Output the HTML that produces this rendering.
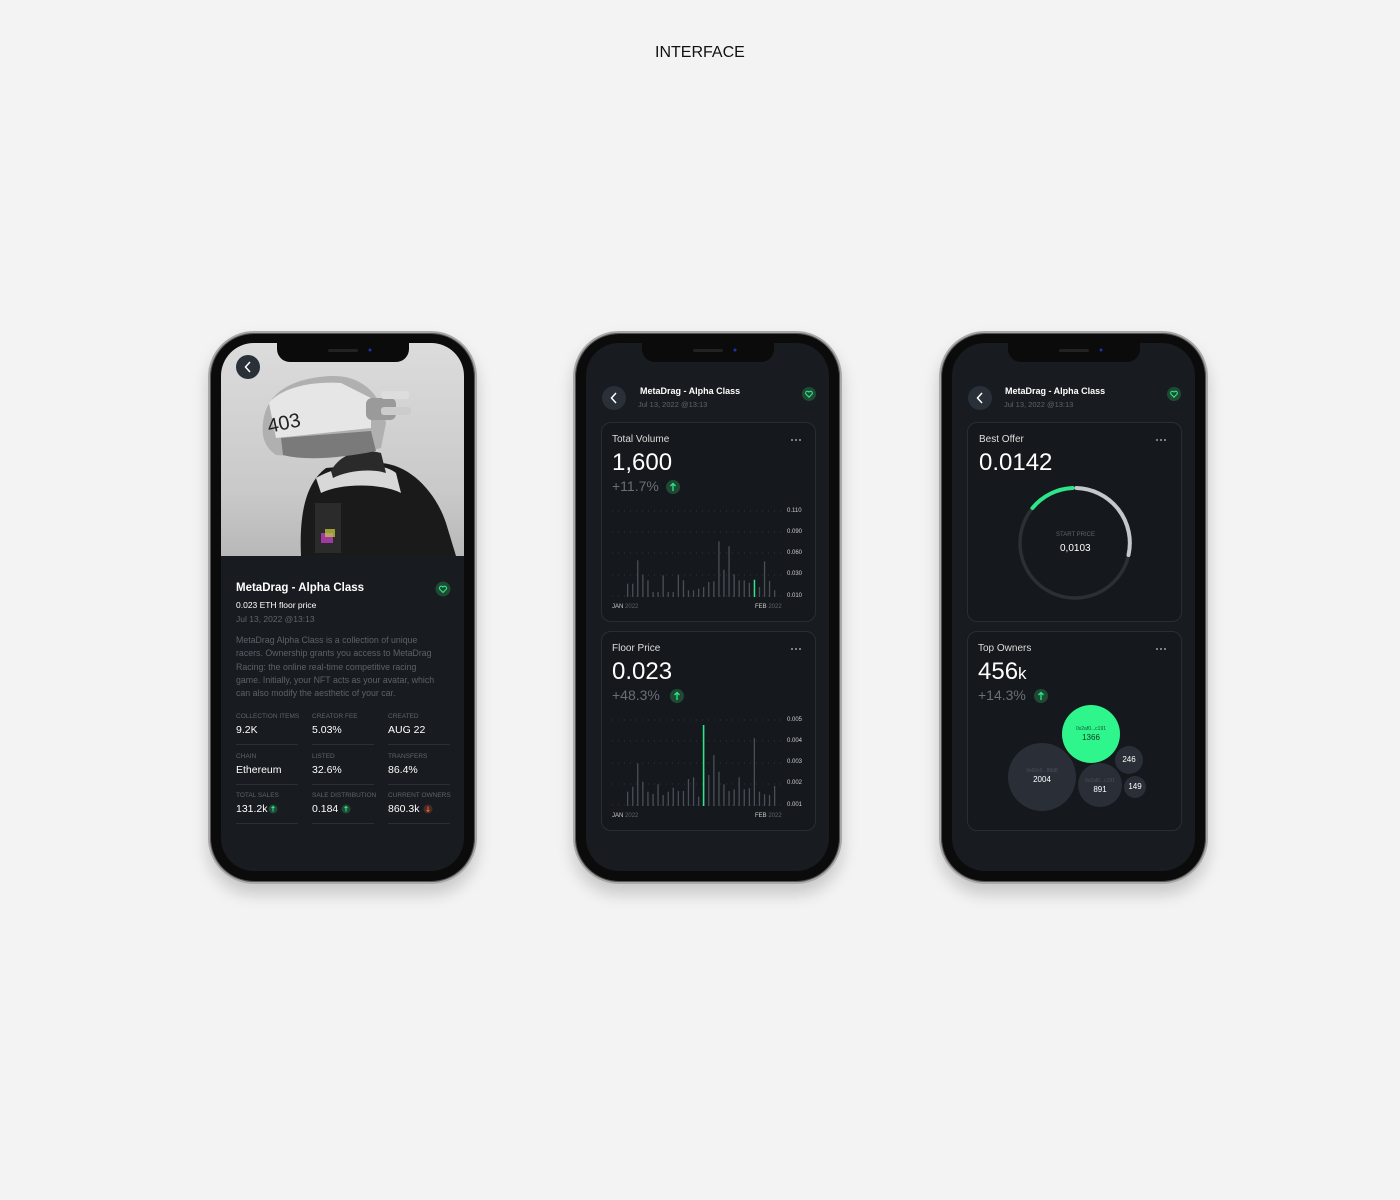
<!DOCTYPE html>
<html><head><meta charset="utf-8">
<style>
*{margin:0;padding:0;box-sizing:border-box}
body{width:1400px;height:1200px;background:#f3f3f3;position:relative;overflow:hidden;font-family:"Liberation Sans",sans-serif}
.a{position:absolute;line-height:1;white-space:nowrap}
.frame{position:absolute;top:331px;width:269px;height:553px;border-radius:46px;background:#0b0b0b;border:2px solid #a8a8a8;box-shadow:0 0 0 1px #555 inset,0 10px 16px rgba(0,0,0,.18)}
.screen{position:absolute;top:343px;width:243px;height:528px;border-radius:33px;background:#181b1f;overflow:hidden}
.notch{position:absolute;top:343px;width:132px;height:19px;background:#0b0b0b;border-radius:0 0 13px 13px}
.card{position:absolute;width:215px;height:200px;border:1px solid #2a2e34;border-radius:10px;background:#15181c}
.w{color:#fff}.g{color:#5f656d}
.lbl{font-size:6.5px;color:#5f656d}
.val{font-size:10.5px;color:#fff}
.hr{position:absolute;height:1px;background:#2c3036;width:62px}
</style></head><body>
<div class="a" style="left:655px;top:45px;font-size:16px;color:#111">INTERFACE</div>

<div class="frame" style="left:208px"></div>
<div class="frame" style="left:573px"></div>
<div class="frame" style="left:939px"></div>

<div class="screen" style="left:221px">
 <div style="position:absolute;left:0;top:0;width:243px;height:213px;background:linear-gradient(#dcdcdc,#c9c9c9 70%,#b8b8b8)"></div>
 <svg width="243" height="213" style="position:absolute;left:0;top:0">
  <path d="M80 213 C78 170 85 140 105 125 L160 120 C190 122 215 150 225 180 L235 213Z" fill="#1a1a1a"/>
  <path d="M95 135 C120 120 160 118 175 130 L180 150 C160 140 120 140 100 150Z" fill="#d8d8d8"/>
  <path d="M110 128 C120 110 140 105 160 110 L165 130 C150 125 125 128 112 135Z" fill="#2a2a2a"/>
  <path d="M42 80 C45 50 70 35 110 33 C140 32 160 50 165 80 L160 105 C130 112 90 115 55 112 C45 105 40 95 42 80Z" fill="#b0b0b0"/>
  <path d="M48 60 C60 45 90 38 120 40 L150 55 L150 85 L55 95Z" fill="#e6e6e6"/>
  <path d="M60 95 L150 88 L155 108 C120 115 85 118 62 112Z" fill="#7a7a7a"/>
  <text x="48" y="90" font-size="20" fill="#222" font-family="Liberation Sans" transform="rotate(-12 48 90)">403</text>
  <rect x="145" y="55" width="30" height="22" rx="6" fill="#9a9a9a"/>
  <rect x="160" y="48" width="28" height="8" rx="3" fill="#ddd"/><rect x="160" y="64" width="30" height="8" rx="3" fill="#ccc"/>
  <rect x="94" y="160" width="26" height="50" fill="#2b2b2b"/>
  <rect x="100" y="190" width="12" height="10" fill="#c03cc0" opacity=".8"/><rect x="104" y="186" width="10" height="8" fill="#c8d23c" opacity=".7"/>
 </svg>
</div>
<div class="screen" style="left:586px"></div>
<div class="screen" style="left:952px"></div>
<div class="notch" style="left:277px"></div>
<div class="notch" style="left:642px"></div>
<div class="notch" style="left:1008px"></div>

<div class="card" style="left:601px;top:422px"></div>
<div class="card" style="left:601px;top:631px"></div>
<div class="card" style="left:967px;top:422px"></div>
<div class="card" style="left:967px;top:631px"></div>

<svg width="1400" height="1200" style="position:absolute;left:0;top:0">
 <circle cx="370" cy="350" r="1.5" fill="#2233aa"/><circle cx="735" cy="350" r="1.5" fill="#2233aa"/><circle cx="1101" cy="350" r="1.5" fill="#2233aa"/>
 <rect x="328" y="349" width="30" height="3" rx="1.5" fill="#222"/><rect x="693" y="349" width="30" height="3" rx="1.5" fill="#222"/><rect x="1059" y="349" width="30" height="3" rx="1.5" fill="#222"/>
 <circle cx="248" cy="367" r="12" fill="#2a3038"/><path d="M250 362 L245.5 367 L250 372" stroke="#fff" stroke-width="1.5" fill="none"/>
 <circle cx="614" cy="398" r="12" fill="#2a3038"/><path d="M616 393 L611.5 398 L616 403" stroke="#fff" stroke-width="1.5" fill="none"/>
 <circle cx="980" cy="398" r="12" fill="#2a3038"/><path d="M982 393 L977.5 398 L982 403" stroke="#fff" stroke-width="1.5" fill="none"/>
 <g fill="#1e4a33"><circle cx="443" cy="589" r="7.5"/><circle cx="809" cy="394" r="7"/><circle cx="1174" cy="394" r="7"/></g>
 <g fill="none" stroke="#2ee68a" stroke-width="1.1">
  <path d="M443 592.5 L439.8 589.3 A1.8 1.8 0 0 1 443 587 A1.8 1.8 0 0 1 446.2 589.3Z"/>
  <path d="M809 397.2 L806 394.2 A1.7 1.7 0 0 1 809 392 A1.7 1.7 0 0 1 812 394.2Z"/>
  <path d="M1174 397.2 L1171 394.2 A1.7 1.7 0 0 1 1174 392 A1.7 1.7 0 0 1 1177 394.2Z"/>
 </g>
 <g fill="#1e4a33"><circle cx="673" cy="487" r="7"/><circle cx="677" cy="696" r="7"/><circle cx="1041" cy="696" r="7"/>
 <circle cx="273" cy="809" r="4.5"/><circle cx="346" cy="809" r="4.5"/></g><circle cx="428" cy="809" r="4.5" fill="#4a2a22"/>
 <g stroke="#2ee68a" stroke-width="1.3" fill="none">
  <path d="M673 491V483.5M670.5 486L673 483.5L675.5 486"/><path d="M677 700V692.5M674.5 695L677 692.5L679.5 695"/><path d="M1041 700V692.5M1038.5 695L1041 692.5L1043.5 695"/>
  <path d="M273 811.5V806.5M271.5 808L273 806.5L274.5 808" stroke-width="1"/><path d="M346 811.5V806.5M344.5 808L346 806.5L347.5 808" stroke-width="1"/>
 </g>
 <path d="M428 806.5V811.5M426.5 810L428 811.5L429.5 810" stroke="#e0603a" stroke-width="1" fill="none"/>
 <g fill="#9aa0a8"><circle cx="792" cy="440" r="1"/><circle cx="796" cy="440" r="1"/><circle cx="800" cy="440" r="1"/>
 <circle cx="792" cy="649" r="1"/><circle cx="796" cy="649" r="1"/><circle cx="800" cy="649" r="1"/>
 <circle cx="1157" cy="440" r="1"/><circle cx="1161" cy="440" r="1"/><circle cx="1165" cy="440" r="1"/>
 <circle cx="1157" cy="649" r="1"/><circle cx="1161" cy="649" r="1"/><circle cx="1165" cy="649" r="1"/></g>
 <g stroke="#3a3f46" stroke-width="0.8" stroke-dasharray="1 5">
  <path d="M612 511H782M612 532H782M612 553H782M612 575H782M612 596H782"/>
  <path d="M612 720H782M612 741H782M612 763H782M612 784H782M612 805H782"/>
 </g>
 <g fill="#4a4f57">
<rect x="627.0" y="583.7" width="1.3" height="13.3"/><rect x="632.1" y="583.7" width="1.3" height="13.3"/><rect x="637.1" y="560.3" width="1.3" height="36.7"/><rect x="642.2" y="574.7" width="1.3" height="22.3"/><rect x="647.3" y="580.3" width="1.3" height="16.7"/><rect x="652.4" y="592" width="1.3" height="5"/><rect x="657.4" y="592" width="1.3" height="5"/><rect x="662.5" y="575.3" width="1.3" height="21.7"/><rect x="667.6" y="592" width="1.3" height="5"/><rect x="672.6" y="592" width="1.3" height="5"/><rect x="677.7" y="574.7" width="1.3" height="22.3"/><rect x="682.8" y="580.3" width="1.3" height="16.7"/><rect x="687.8" y="590.3" width="1.3" height="6.7"/><rect x="692.9" y="590.3" width="1.3" height="6.7"/><rect x="698.0" y="588.7" width="1.3" height="8.3"/><rect x="703.0" y="587" width="1.3" height="10"/><rect x="708.1" y="582" width="1.3" height="15"/><rect x="713.2" y="581.3" width="1.3" height="15.7"/><rect x="718.3" y="541.3" width="1.3" height="55.7"/><rect x="723.3" y="569.7" width="1.3" height="27.3"/><rect x="728.4" y="546.3" width="1.3" height="50.7"/><rect x="733.5" y="574.3" width="1.3" height="22.7"/><rect x="738.5" y="580.3" width="1.3" height="16.7"/><rect x="743.6" y="580.3" width="1.3" height="16.7"/><rect x="748.7" y="582.7" width="1.3" height="14.3"/><rect x="758.8" y="587" width="1.3" height="10"/><rect x="763.9" y="561.3" width="1.3" height="35.7"/><rect x="768.9" y="581" width="1.3" height="16"/><rect x="774.0" y="590.3" width="1.3" height="6.7"/>
 </g>
 <rect x="753.7" y="579.7" width="1.5" height="17.3" fill="#2ee68a"/>
 <g fill="#4a4f57">
<rect x="627.0" y="791.7" width="1.3" height="14.3"/><rect x="632.1" y="786.7" width="1.3" height="19.3"/><rect x="637.1" y="763.3" width="1.3" height="42.7"/><rect x="642.2" y="781.7" width="1.3" height="24.3"/><rect x="647.3" y="791.7" width="1.3" height="14.3"/><rect x="652.4" y="794" width="1.3" height="12"/><rect x="657.4" y="784.3" width="1.3" height="21.7"/><rect x="662.5" y="795" width="1.3" height="11"/><rect x="667.6" y="791.7" width="1.3" height="14.3"/><rect x="672.6" y="787.7" width="1.3" height="18.3"/><rect x="677.7" y="791" width="1.3" height="15"/><rect x="682.8" y="791" width="1.3" height="15"/><rect x="687.8" y="779" width="1.3" height="27"/><rect x="692.9" y="777.3" width="1.3" height="28.7"/><rect x="698.0" y="796.7" width="1.3" height="9.3"/><rect x="708.1" y="775" width="1.3" height="31"/><rect x="713.2" y="755" width="1.3" height="51"/><rect x="718.3" y="771.7" width="1.3" height="34.3"/><rect x="723.3" y="784.3" width="1.3" height="21.7"/><rect x="728.4" y="791" width="1.3" height="15"/><rect x="733.5" y="789.3" width="1.3" height="16.7"/><rect x="738.5" y="777.3" width="1.3" height="28.7"/><rect x="743.6" y="789.3" width="1.3" height="16.7"/><rect x="748.7" y="788.3" width="1.3" height="17.7"/><rect x="753.7" y="738.3" width="1.3" height="67.7"/><rect x="758.8" y="791.7" width="1.3" height="14.3"/><rect x="763.9" y="794.3" width="1.3" height="11.7"/><rect x="768.9" y="795" width="1.3" height="11"/><rect x="774.0" y="786" width="1.3" height="20"/>
 </g>
 <rect x="702.8" y="725" width="1.6" height="81" fill="#2ee68a"/>
 <circle cx="1075" cy="543" r="55" fill="none" stroke="#2b3037" stroke-width="3.5"/>
 <path d="M1076.5 488 A55 55 0 0 1 1128.5 555" fill="none" stroke="#c4c8cd" stroke-width="4" stroke-linecap="round"/>
 <path d="M1032.5 508 A55 55 0 0 1 1072.5 488" fill="none" stroke="#2ee68a" stroke-width="4" stroke-linecap="round"/>
 <circle cx="1042" cy="777" r="34" fill="#2a2f37"/>
 <circle cx="1100" cy="785" r="22" fill="#2a2f37"/>
 <circle cx="1129" cy="760" r="14" fill="#2a2f37"/>
 <circle cx="1135" cy="787" r="11" fill="#2a2f37"/>
 <circle cx="1091" cy="734" r="29" fill="#2ef58c"/>
</svg>

<div class="a w" style="left:236px;top:583px;font-size:11.5px;font-weight:bold">MetaDrag - Alpha Class</div>
<div class="a w" style="left:236px;top:601px;font-size:8.5px">0.023 ETH floor price</div>
<div class="a g" style="left:236px;top:615px;font-size:8.5px">Jul 13, 2022 @13:13</div>
<div class="a" style="left:236px;top:634px;font-size:8.8px;line-height:13.3px;color:#5c626a;white-space:normal;width:206px">MetaDrag Alpha Class is a collection of unique racers. Ownership grants you access to MetaDrag Racing: the online real-time competitive racing game. Initially, your NFT acts as your avatar, which can also modify the aesthetic of your car.</div>
<div class="a lbl" style="left:236px;top:714px">COLLECTION ITEMS</div><div class="a lbl" style="left:312px;top:714px">CREATOR FEE</div><div class="a lbl" style="left:388px;top:714px">CREATED</div>
<div class="a val" style="left:236px;top:725px">9.2K</div><div class="a val" style="left:312px;top:725px">5.03%</div><div class="a val" style="left:388px;top:725px">AUG 22</div>
<div class="hr" style="left:236px;top:744px"></div><div class="hr" style="left:312px;top:744px"></div><div class="hr" style="left:388px;top:744px"></div>
<div class="a lbl" style="left:236px;top:754px">CHAIN</div><div class="a lbl" style="left:312px;top:754px">LISTED</div><div class="a lbl" style="left:388px;top:754px">TRANSFERS</div>
<div class="a val" style="left:236px;top:765px">Ethereum</div><div class="a val" style="left:312px;top:765px">32.6%</div><div class="a val" style="left:388px;top:765px">86.4%</div>
<div class="hr" style="left:236px;top:784px"></div><div class="hr" style="left:312px;top:784px"></div><div class="hr" style="left:388px;top:784px"></div>
<div class="a lbl" style="left:236px;top:793px">TOTAL SALES</div><div class="a lbl" style="left:312px;top:793px">SALE DISTRIBUTION</div><div class="a lbl" style="left:388px;top:793px">CURRENT OWNERS</div>
<div class="a val" style="left:236px;top:804px">131.2k</div><div class="a val" style="left:312px;top:804px">0.184</div><div class="a val" style="left:388px;top:804px">860.3k</div>
<div class="hr" style="left:236px;top:823px"></div><div class="hr" style="left:312px;top:823px"></div><div class="hr" style="left:388px;top:823px"></div>

<div class="a w" style="left:640px;top:387px;font-size:9px;font-weight:bold">MetaDrag - Alpha Class</div>
<div class="a g" style="left:638px;top:401px;font-size:7.5px">Jul 13, 2022 @13:13</div>
<div class="a w" style="left:612px;top:435px;font-size:10px;color:#ddd">Total Volume</div>
<div class="a w" style="left:612px;top:451px;font-size:24px">1,600</div>
<div class="a g" style="left:612px;top:479px;font-size:14px;color:#6a7078">+11.7%</div>
<div class="a" style="left:787px;top:500.5px;font-size:6px;color:#ccc;line-height:21.3px">0.110<br>0.090<br>0.060<br>0.030<br>0.010</div>
<div class="a" style="left:612px;top:604px;font-size:6px;color:#ccc">JAN <span style="color:#5f656d">2022</span></div>
<div class="a" style="left:755px;top:604px;font-size:6px;color:#ccc">FEB <span style="color:#5f656d">2022</span></div>
<div class="a w" style="left:612px;top:644px;font-size:10px;color:#ddd">Floor Price</div>
<div class="a w" style="left:612px;top:660px;font-size:24px">0.023</div>
<div class="a g" style="left:612px;top:688px;font-size:14px;color:#6a7078">+48.3%</div>
<div class="a" style="left:787px;top:709.5px;font-size:6px;color:#ccc;line-height:21.3px">0.005<br>0.004<br>0.003<br>0.002<br>0.001</div>
<div class="a" style="left:612px;top:813px;font-size:6px;color:#ccc">JAN <span style="color:#5f656d">2022</span></div>
<div class="a" style="left:755px;top:813px;font-size:6px;color:#ccc">FEB <span style="color:#5f656d">2022</span></div>

<div class="a w" style="left:1005px;top:387px;font-size:9px;font-weight:bold">MetaDrag - Alpha Class</div>
<div class="a g" style="left:1004px;top:401px;font-size:7.5px">Jul 13, 2022 @13:13</div>
<div class="a w" style="left:979px;top:435px;font-size:10px;color:#ddd">Best Offer</div>
<div class="a w" style="left:979px;top:451px;font-size:24px">0.0142</div>
<div class="a g" style="left:1056px;top:532px;font-size:6px">START PRICE</div>
<div class="a w" style="left:1060px;top:544px;font-size:10px">0,0103</div>
<div class="a w" style="left:978px;top:644px;font-size:10px;color:#ddd">Top Owners</div>
<div class="a w" style="left:978px;top:660px;font-size:24px">456<span style="font-size:17px">k</span></div>
<div class="a g" style="left:978px;top:688px;font-size:14px;color:#6a7078">+14.3%</div>
<div class="a" style="left:1076px;top:727px;font-size:5px;color:#145a32;width:30px;text-align:center">0x2af0...c191</div>
<div class="a" style="left:1076px;top:734px;font-size:8px;color:#0d3a20;width:30px;text-align:center">1366</div>
<div class="a" style="left:1022px;top:769px;font-size:5px;color:#4a5058;width:40px;text-align:center">0x60c0...88d8</div>
<div class="a w" style="left:1022px;top:776px;font-size:8px;width:40px;text-align:center">2004</div>
<div class="a" style="left:1083px;top:779px;font-size:5px;color:#4a5058;width:34px;text-align:center">0x2af0...c191</div>
<div class="a w" style="left:1085px;top:786px;font-size:8px;width:30px;text-align:center">891</div>
<div class="a w" style="left:1119px;top:756px;font-size:8px;width:20px;text-align:center">246</div>
<div class="a w" style="left:1125px;top:783px;font-size:8px;width:20px;text-align:center">149</div>
</body></html>
